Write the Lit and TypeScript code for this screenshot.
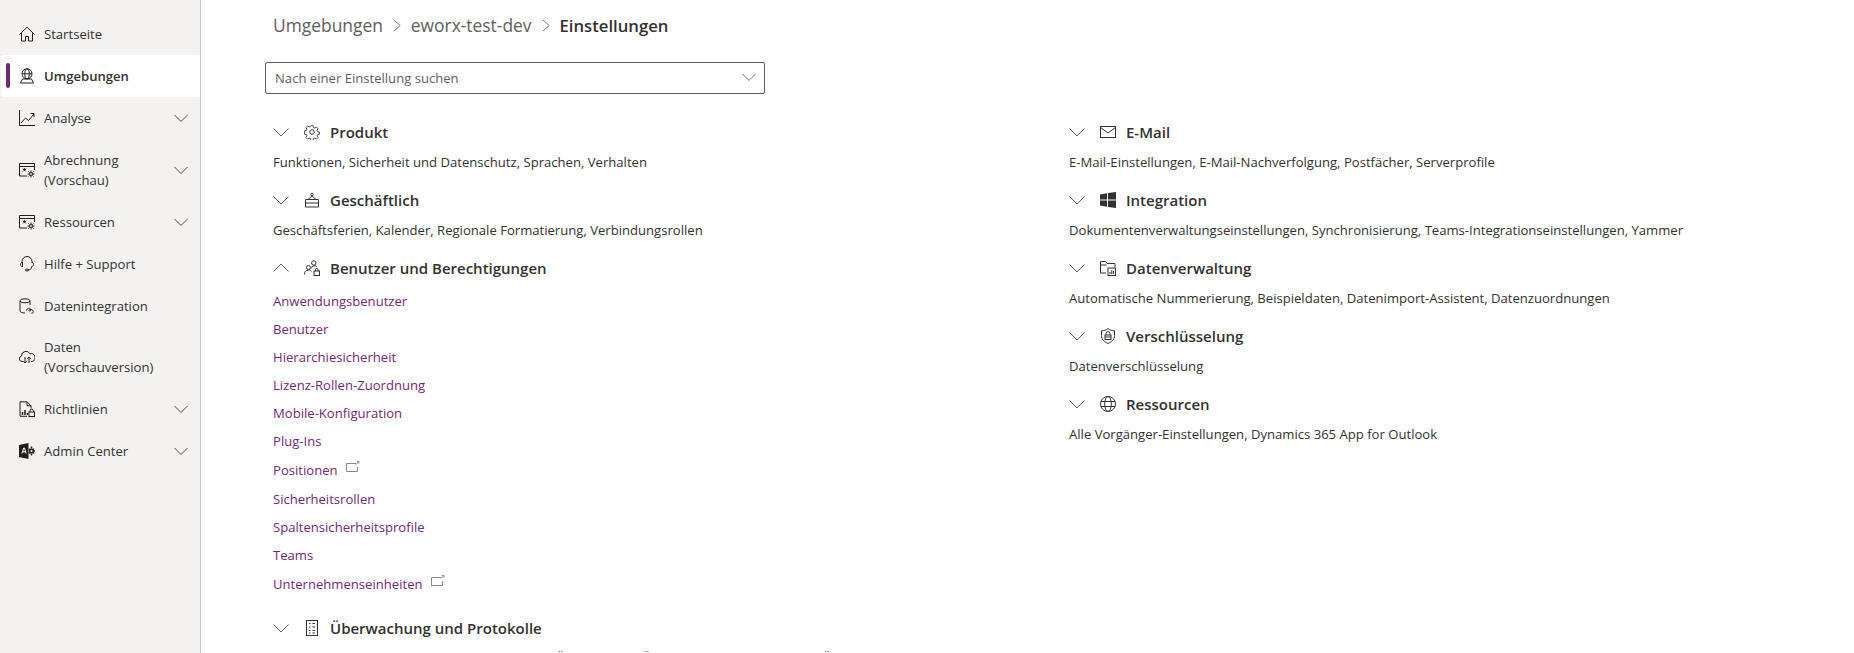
import { LitElement, html, css, svg } from "lit";
import { customElement } from "lit/decorators.js";

const chev = (cls = "") => html`<svg class="chev ${cls}" viewBox="0 0 16 16" width="16" height="16"><path d="M0.5 4.500 L8 12 L15.500 4.500" fill="none" stroke="currentColor" stroke-width="1"/></svg>`;
const ico = (body: unknown, s = 16, vb = "0 0 16 16") => html`<svg viewBox="${vb}" width="${s}" height="${s}" fill="none" stroke="currentColor" stroke-width="1">${body}</svg>`;

const navIcons: Record<string, unknown> = {
  home: svg`<path d="M.5 8.500 8 1.200l7.500 7.300M2.500 7v8h4v-4.500h3V15h4V7"/>`,
  env: svg`<circle cx="8" cy="5.800" r="5"/><ellipse cx="8" cy="5.800" rx="2.200" ry="5"/><path d="M3 5.800h10M1.500 15h13l-2-4M1.500 15l2-4M3.500 11h9"/>`,
  chart: svg`<path d="M.5 0v15.500H16M2 13l4.500-5 3 2.500L15 4M11.500 3.500H15V7"/>`,
  bill: svg`<path d="M.5 14V1.500h15V8M.5 14H8M.5 4.500h15"/><path d="M4 7.500h3M5.500 6v3M4 9.500l3-3M4 6.500l3 3" stroke-width=".8"/><circle cx="12" cy="12" r="1.500"/><path d="M12 8.500v1.500M12 14v1.500M8.500 12H10M14 12h1.500M9.500 9.500l1 1M13.500 13.500l1 1M14.500 9.500l-1 1M10.500 13.500l-1 1"/>`,
  head: svg`<path d="M3 7V5.500a5 5 0 0 1 10 0V7M3 6.500C1 6.500 1 10.500 3 10.500M13 6.500c2 0 2 4 0 4M12.500 10.500V11c0 2-1.500 3-3.500 3"/><ellipse cx="8" cy="14" rx="1.500" ry="1"/><path d="M3.500 6v5"/>`,
  db: svg`<ellipse cx="6" cy="2.800" rx="5" ry="2"/><path d="M1 2.800V13c0 1 2 2 5 2M11 2.800V7"/><path d="M7.500 12.500c0-2 3-3 4-1.500s-1 3-1.500 1.800 1.500-2 3-1 2 3.500-.5 3.500"/>`,
  cloud: svg`<path d="M4 12.500H3a2.800 2.800 0 0 1-.5-5.500A4.500 4.500 0 0 1 11 4.800 3.800 3.800 0 0 1 13 12.500h-1"/><path d="M6 8v6M4.200 12.300 6 14l1.800-1.700M10 14V8M8.200 9.700 10 8l1.800 1.700"/>`,
  policy: svg`<path d="M1 15V.8h7l4 4V7.500M8 .8v4h4M1 15.300h7"/><path d="M3.500 14v-3M6 14V9M8.500 14v-2" stroke-width="1.500"/><rect x="10" y="11" width="5.500" height="4.500"/><path d="M11 11V9.800a1.700 1.700 0 0 1 3.400 0V11"/>`,
  admin: svg`<path d="M0 2 9.500 0v16L0 14Z" fill="currentColor" stroke="none"/><path d="M3 10.500 4.700 5h.8l1.600 5.500M3.700 8.800h2.700" stroke="#fff"/><circle cx="12.500" cy="8" r="1.800" stroke-width="1.400"/><path d="M12.500 3.500v2M12.500 10.500v2M10 5.800l1 1M14 9.500l1 1M15 5.800l-1 1M11 9.500l-1 1M15 8h1" stroke-width="1.500"/>`,
};

const sectionIcons: Record<string, unknown> = {
  gear: svg`<circle cx="8" cy="8" r="2.300"/><path d="M6.700 1h2.600l.4 2 1.400.6 1.800-1.100 1.800 1.800-1.100 1.800.6 1.400 2 .4v2.600l-2 .4-.6 1.400 1.100 1.800-1.800 1.800-1.800-1.100-1.400.6-.4 1.900H6.700l-.4-1.900-1.400-.6-1.800 1.100-1.800-1.800 1.100-1.800-.6-1.400-2-.4V6.700l2-.4.600-1.400-1.100-1.800 1.800-1.800 1.800 1.100 1.400-.6Z" transform="translate(.8 .8) scale(.9)"/>`,
  biz: svg`<path d="M1.500 7.500h13v7.500h-13ZM1.500 11h13M4 7.500 8 4l4 3.500"/><circle cx="8" cy="2.500" r="1.300"/>`,
  users: svg`<circle cx="9.800" cy="3" r="2.200"/><circle cx="4.500" cy="7.500" r="2"/><path d="M.5 14.500c0-3 1.500-4.500 4-4.500 1.500 0 2.500.5 3 1.500M7 8.500c.5-1.500 1.500-2.500 3-2.800 1.500 0 2.500.5 3.300 1.500"/><rect x="10" y="11" width="5.500" height="4.500"/><path d="M11.500 11v-1.200a1.300 1.300 0 0 1 2.600 0V11"/>`,
  list: svg`<rect x="2.500" y=".5" width="11" height="15"/><path d="M5 3.500h1.500M5 7h1.500M5 10.500h1.500M8.500 3.500H11M8.500 7H11M8.500 10.500H11M5 13h1.500M8.500 13H11"/>`,
  mail: svg`<rect x=".5" y="2.500" width="15" height="11"/><path d="M.5 3.500 8 9l7.500-5.500"/>`,
  win: svg`<path d="M0 2.400 7 1.300v6.200H0ZM8 1.100 16 0v7.500H8ZM0 8.500h7v6.200L0 13.600ZM8 8.500h8V16L8 14.900Z" fill="currentColor" stroke="none"/>`,
  data: svg`<path d="M.5 13V1.500h5l1.500 2h8V7M.5 5h6M.5 13H6"/><rect x="8" y="8" width="7.500" height="7.500"/><path d="M10 14v-2M11.800 14V10M13.500 14v-3"/>`,
  shield: svg`<path d="M8 .6c2 1.500 4 2.200 6.500 2.200v4.700c0 3.800-2.500 6.300-6.500 7.900-4-1.600-6.500-4.100-6.500-7.900V2.800C4 2.800 6 2.100 8 .6Z"/><rect x="5" y="7" width="6" height="4.500"/><path d="M6 7V5.500a2 2 0 0 1 4 0V7M5 9h6"/>`,
  globe: svg`<circle cx="8" cy="8" r="7.500"/><ellipse cx="8" cy="8" rx="3.300" ry="7.500"/><path d="M1 5.500h14M1 10.500h14"/>`,
};

const nav = [
  { t: ["Startseite"], i: "home" },
  { t: ["Umgebungen"], i: "env", active: true },
  { t: ["Analyse"], i: "chart", c: true },
  { t: ["Abrechnung", "(Vorschau)"], i: "bill", c: true },
  { t: ["Ressourcen"], i: "bill", c: true },
  { t: ["Hilfe + Support"], i: "head" },
  { t: ["Datenintegration"], i: "db" },
  { t: ["Daten", "(Vorschauversion)"], i: "cloud" },
  { t: ["Richtlinien"], i: "policy", c: true },
  { t: ["Admin Center"], i: "admin", c: true },
];

const links: [string, boolean][] = [
  ["Anwendungsbenutzer", false], ["Benutzer", false], ["Hierarchiesicherheit", false],
  ["Lizenz-Rollen-Zuordnung", false], ["Mobile-Konfiguration", false], ["Plug-Ins", false],
  ["Positionen", true], ["Sicherheitsrollen", false], ["Spaltensicherheitsprofile", false],
  ["Teams", false], ["Unternehmenseinheiten", true],
];

const ext = html`<svg class="ext" viewBox="0 0 14 12" width="14" height="12" fill="none" stroke="currentColor" stroke-width="1"><path d="M10 2.500H.5v8h11V6"/><path d="M10 3.500 12.500 1M11 .5h2v2"/></svg>`;
const sep = html`<svg viewBox="0 0 10 16" width="8" height="13" fill="none" stroke="currentColor"><path d="M1 1l8 7-8 7"/></svg>`;

@customElement("app-root")
export class AppRoot extends LitElement {
  static styles = css`
    :host { display: flex; height: 653px; width: 1854px; overflow: hidden; background: #fff; color: #323130;
      font-family: "Open Sans", "Noto Sans", sans-serif; font-size: 13.1px; }
    .side { width: 200px; flex: none; background: #f3f2f1; border-right: 1px solid #c8c6c4; padding-top: 13px; }
    .item { display: flex; align-items: center; height: 42px; margin-left: 1px; padding-left: 18px; position: relative; }
    .item.two { height: 61.5px; }
    .item.active { background: #fff; font-weight: 600; border-radius: 2px; }
    .item.active::before { content: ""; position: absolute; left: 5px; top: 8px; bottom: 9px; width: 4px; border-radius: 2px; background: #742774; }
    .nic { width: 16px; height: 16px; display: flex; flex: none; color: #201f1e; }
    .lbl { margin-left: 9px; line-height: 20px; flex: 1; }
    .item .chev { margin-right: 12px; flex: none; color: #323130; width: 14px; height: 14px; }
    main { flex: 1; min-width: 0; padding-left: 64px; padding-top: 11px; }
    .crumb { display: flex; align-items: center; height: 28px; padding-left: 8px; font-size: 17.4px; color: #605e5c; }
    .crumb b { font-weight: 600; font-size: 16.7px; color: #323130; }
    .crumb svg { margin: 0 10px; color: #605e5c; }
    .search { box-sizing: border-box; width: 500px; height: 32px; margin-top: 23px; border: 1px solid #605e5c; border-radius: 2px; display: flex; align-items: center; justify-content: space-between; padding: 0 8px 0 9px; color: #605e5c; }
    .search .chev { width: 14px; height: 14px; color: #605e5c; margin-top: -2px; }
    .cols { display: flex; margin-top: 26px; padding-left: 8px; }
    .col { width: 796px; flex: none; }
    .head { display: flex; align-items: center; height: 24px; font-size: 15px; font-weight: 600; color: #323130; }
    .head .chev { color: #605e5c; width: 16px; height: 16px; }
    .head .chev.up { transform: rotate(180deg); }
    .sic { display: flex; margin: 0 10px 0 15px; color: #323130; }
    .desc { height: 44px; padding-top: 8px; box-sizing: border-box; line-height: 20px; white-space: nowrap; }
    .links { display: flex; flex-direction: column; padding-top: 7px; padding-bottom: 17px; }
    .link { height: 28px; display: flex; align-items: center; color: #742774; }
    .link.e { height: 30px; }
    .ext { margin-left: 8px; margin-top: -6px; color: #8a8886; }
  `;

  private section(title: string, icon: string, desc: string, open = false) {
    return html`<div class="sec">
      <div class="head">${chev(open ? "up" : "")}<span class="sic">${ico(sectionIcons[icon])}</span>${title}</div>
      ${open
        ? html`<div class="links">${links.map(([l, e]) => html`<div class="link ${e ? "e" : ""}">${l}${e ? ext : ""}</div>`)}</div>`
        : html`<div class="desc">${desc}</div>`}
    </div>`;
  }

  render() {
    return html`
      <nav class="side">
        ${nav.map((n) => html`<div class="item ${n.t.length > 1 ? "two" : ""} ${n.active ? "active" : ""}">
          <span class="nic">${ico(navIcons[n.i])}</span>
          <span class="lbl">${n.t.map((l, i) => html`${i ? html`<br />` : ""}${l}`)}</span>
          ${n.c ? chev() : ""}
        </div>`)}
      </nav>
      <main>
        <div class="crumb">
          <span>Umgebungen</span>${sep}<span>eworx-test-dev</span>${sep}<b>Einstellungen</b>
        </div>
        <div class="search"><span>Nach einer Einstellung suchen</span>${chev()}</div>
        <div class="cols">
          <div class="col">
            ${this.section("Produkt", "gear", "Funktionen, Sicherheit und Datenschutz, Sprachen, Verhalten")}
            ${this.section("Geschäftlich", "biz", "Geschäftsferien, Kalender, Regionale Formatierung, Verbindungsrollen")}
            ${this.section("Benutzer und Berechtigungen", "users", "", true)}
            ${this.section("Überwachung und Protokolle", "list", "Systemaufträge, Ablaufverfolgung, Protokolle, Überprüfung, Überwachungseinstellungen, Überwachung")}
          </div>
          <div class="col">
            ${this.section("E-Mail", "mail", "E-Mail-Einstellungen, E-Mail-Nachverfolgung, Postfächer, Serverprofile")}
            ${this.section("Integration", "win", "Dokumentenverwaltungseinstellungen, Synchronisierung, Teams-Integrationseinstellungen, Yammer")}
            ${this.section("Datenverwaltung", "data", "Automatische Nummerierung, Beispieldaten, Datenimport-Assistent, Datenzuordnungen")}
            ${this.section("Verschlüsselung", "shield", "Datenverschlüsselung")}
            ${this.section("Ressourcen", "globe", "Alle Vorgänger-Einstellungen, Dynamics 365 App for Outlook")}
          </div>
        </div>
      </main>`;
  }
}
